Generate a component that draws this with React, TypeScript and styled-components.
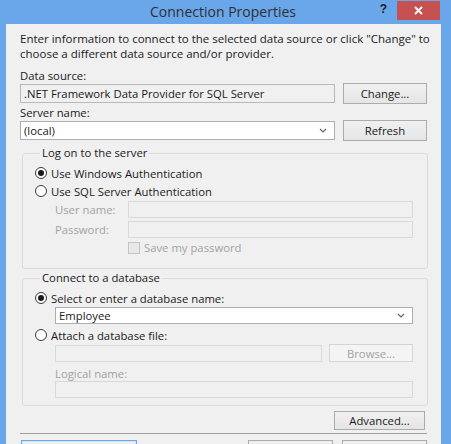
import React from 'react';
import styled, { createGlobalStyle, css } from 'styled-components';

const GlobalStyle = createGlobalStyle`
  html, body {
    margin: 0;
    padding: 0;
    background: #ffffff;
  }

  body {
    font-family: "Open Sans", "Noto Sans", sans-serif;
    font-size: 11.3px;
    color: #1a1a1a;
  }

  * {
    box-sizing: border-box;
  }
`;

// Window frame
const Window = styled.div`
  width: 451px;
  height: 444px;
  overflow: hidden;
  background: #6aa6ea;
  display: flex;
  flex-direction: column;
`;

const TitleBar = styled.div`
  height: 24px;
  flex: none;
  display: flex;
  align-items: flex-start;
  padding-right: 11px;
`;

const Title = styled.div`
  flex: 1;
  padding-left: 76px;
  text-align: center;
  font-size: 14px;
  line-height: 24px;
  color: #2f2f2f;
`;

const CaptionButtons = styled.div`
  display: flex;
  width: 70px;
`;

const HelpButton = styled.div`
  width: 27px;
  height: 19px;
  margin-top: 1px;
  text-align: center;
  font-family: "Liberation Sans", sans-serif;
  font-weight: bold;
  font-size: 12px;
  line-height: 17px;
  color: #1e1e1e;
`;

const CloseButton = styled.div`
  width: 43px;
  height: 19px;
  margin-top: 1px;
  background: #c75050;
  color: #ffffff;
  display: flex;
  align-items: center;
  justify-content: center;
`;

const Body = styled.div`
  flex: 1;
  margin: 0 10px 0 6px;
  background: #f0f0f0;
  padding: 7px 14px 0 14px;
  display: flex;
  flex-direction: column;
`;

const Description = styled.p`
  margin: 0 -10px 0 0;
  font-size: 11.5px;
  line-height: 15px;
`;

const Label = styled.div<{ $top?: number; $disabled?: boolean; $indent?: number }>`
  margin-top: ${(p) => p.$top ?? 0}px;
  margin-left: ${(p) => p.$indent ?? 0}px;
  line-height: 14px;
  color: ${(p) => (p.$disabled ? '#a2a2a2' : '#1a1a1a')};
`;

const Row = styled.div<{ $height?: number; $indent?: number; $gap?: number; $top?: number }>`
  display: flex;
  align-items: center;
  gap: ${(p) => p.$gap ?? 8}px;
  height: ${(p) => p.$height ?? 21}px;
  margin-left: ${(p) => p.$indent ?? 0}px;
  margin-top: ${(p) => p.$top ?? 0}px;
`;

type BoxKind = 'normal' | 'readonly' | 'disabled';

const TextBox = styled.div<{ $kind?: BoxKind; $height?: number }>`
  flex: 1;
  min-width: 0;
  height: ${(p) => p.$height ?? 19}px;
  display: flex;
  align-items: center;
  padding: 0 3px;
  border: 1px solid #abadb3;
  background: #ffffff;
  white-space: nowrap;
  ${(p) =>
    p.$kind === 'readonly' &&
    css`
      background: #f0f0f0;
      border-color: #b9b9b9;
    `}
  ${(p) =>
    p.$kind === 'disabled' &&
    css`
      background: #f0f0f0;
      border-color: #d9d9d9;
    `}
`;

const ComboText = styled.span`
  flex: 1;
`;

const Chevron = () => (
  <svg width="8" height="5" viewBox="0 0 8 5" style={{ marginRight: 4 }}>
    <polyline points="1,1 4,4 7,1" fill="none" stroke="#666666" strokeWidth="1.2" />
  </svg>
);

const Button = styled.div<{ $width: number; $height?: number; $disabled?: boolean; $default?: boolean }>`
  flex: none;
  width: ${(p) => p.$width}px;
  height: ${(p) => p.$height ?? 21}px;
  display: flex;
  align-items: center;
  justify-content: center;
  border: 1px solid #acacac;
  background: linear-gradient(#f0f0f0, #e5e5e5);
  color: #1a1a1a;
  ${(p) =>
    p.$disabled &&
    css`
      border-color: #d5d5d5;
      background: #f4f4f4;
      color: #a2a2a2;
    `}
  ${(p) =>
    p.$default &&
    css`
      border-color: #6aa8e8;
      box-shadow: inset 0 0 0 1px #cfe4f8;
    `}
`;

const Group = styled.fieldset<{ $top: number; $bottom: number }>`
  margin: ${(p) => p.$top}px -1px 0 2px;
  padding: 4px 14px ${(p) => p.$bottom}px 12px;
  border: 1px solid #dcdcdc;
  border-radius: 3px;
  min-width: 0;
`;

const Legend = styled.legend`
  margin-left: 5px;
  padding: 0 2px;
  line-height: 14px;
`;

const RadioRow = styled.label<{ $top?: number }>`
  display: flex;
  align-items: center;
  gap: 4px;
  height: 18px;
  margin-top: ${(p) => p.$top ?? 0}px;
`;

const RadioCircle = styled.span<{ $checked?: boolean }>`
  width: 12px;
  height: 12px;
  border-radius: 50%;
  border: 1px solid #3a3a3a;
  background: #ffffff;
  display: flex;
  align-items: center;
  justify-content: center;

  &::after {
    content: '';
    display: ${(p) => (p.$checked ? 'block' : 'none')};
    width: 6px;
    height: 6px;
    border-radius: 50%;
    background: #1b1b1b;
  }
`;

const CredGrid = styled.div`
  display: grid;
  grid-template-columns: 73px 1fr;
  grid-auto-rows: 17px;
  row-gap: 3px;
  align-items: center;
  margin: 1px 0 0 20px;
`;

const CheckRow = styled.div`
  display: flex;
  align-items: center;
  gap: 4px;
  height: 15px;
  margin: 2px 0 0 93px;
  color: #a2a2a2;
`;

const CheckBox = styled.span`
  width: 12px;
  height: 12px;
  border: 1px solid #c4c4c4;
  background: #e8e8e8;
`;

const AdvancedRow = styled.div`
  display: flex;
  justify-content: flex-end;
  margin-top: 5px;
  padding-right: 2px;
`;

const Separator = styled.div`
  margin-top: 3px;
  height: 1px;
  background: #a0a0a0;
`;

const DialogButtons = styled.div`
  display: flex;
  margin: 6px 0 0 1px;

  .right {
    margin-left: auto;
    display: flex;
    gap: 9px;
  }
`;

const App: React.FC = () => {
  return (
    <>
      <GlobalStyle />
      <Window>
        <TitleBar>
          <Title>Connection Properties</Title>
          <CaptionButtons>
            <HelpButton>?</HelpButton>
            <CloseButton>
              <svg width="9" height="9" viewBox="0 0 9 9">
                <path d="M1 1 L8 8 M8 1 L1 8" stroke="#ffffff" strokeWidth="1.8" />
              </svg>
            </CloseButton>
          </CaptionButtons>
        </TitleBar>

        <Body>
          <Description>
            Enter information to connect to the selected data source or click "Change" to choose a
            different data source and/or provider.
          </Description>

          <Label $top={8}>Data source:</Label>
          <Row>
            <TextBox $kind="readonly">.NET Framework Data Provider for SQL Server</TextBox>
            <Button $width={84}>Change...</Button>
          </Row>

          <Label $top={2}>Server name:</Label>
          <Row>
            <TextBox>
              <ComboText>(local)</ComboText>
              <Chevron />
            </TextBox>
            <Button $width={84}>Refresh</Button>
          </Row>

          <Group $top={5} $bottom={13}>
            <Legend>Log on to the server</Legend>
            <RadioRow>
              <RadioCircle $checked />
              Use Windows Authentication
            </RadioRow>
            <RadioRow>
              <RadioCircle />
              Use SQL Server Authentication
            </RadioRow>
            <CredGrid>
              <Label $disabled>User name:</Label>
              <TextBox $kind="disabled" $height={17} />
              <Label $disabled>Password:</Label>
              <TextBox $kind="disabled" $height={17} />
            </CredGrid>
            <CheckRow>
              <CheckBox />
              Save my password
            </CheckRow>
          </Group>

          <Group $top={2} $bottom={7}>
            <Legend>Connect to a database</Legend>
            <RadioRow>
              <RadioCircle $checked />
              Select or enter a database name:
            </RadioRow>
            <Row $height={17} $indent={20}>
              <TextBox $height={17}>
                <ComboText>Employee</ComboText>
                <Chevron />
              </TextBox>
            </Row>
            <RadioRow $top={2}>
              <RadioCircle />
              Attach a database file:
            </RadioRow>
            <Row $height={18} $indent={20} $gap={7}>
              <TextBox $kind="disabled" $height={17} />
              <Button $width={84} $height={18} $disabled>
                Browse...
              </Button>
            </Row>
            <Label $disabled $top={5} $indent={20}>
              Logical name:
            </Label>
            <Row $height={17} $indent={20}>
              <TextBox $kind="disabled" $height={17} />
            </Row>
          </Group>

          <AdvancedRow>
            <Button $width={91} $height={19}>
              Advanced...
            </Button>
          </AdvancedRow>

          <Separator />

          {/* only the top edge of these buttons is inside the picture */}
          <DialogButtons>
            <Button $width={116} $default aria-label="Test Connection" />
            <div className="right">
              <Button $width={85} aria-label="OK" />
              <Button $width={85} aria-label="Cancel" />
            </div>
          </DialogButtons>
        </Body>
      </Window>
    </>
  );
};

export default App;
